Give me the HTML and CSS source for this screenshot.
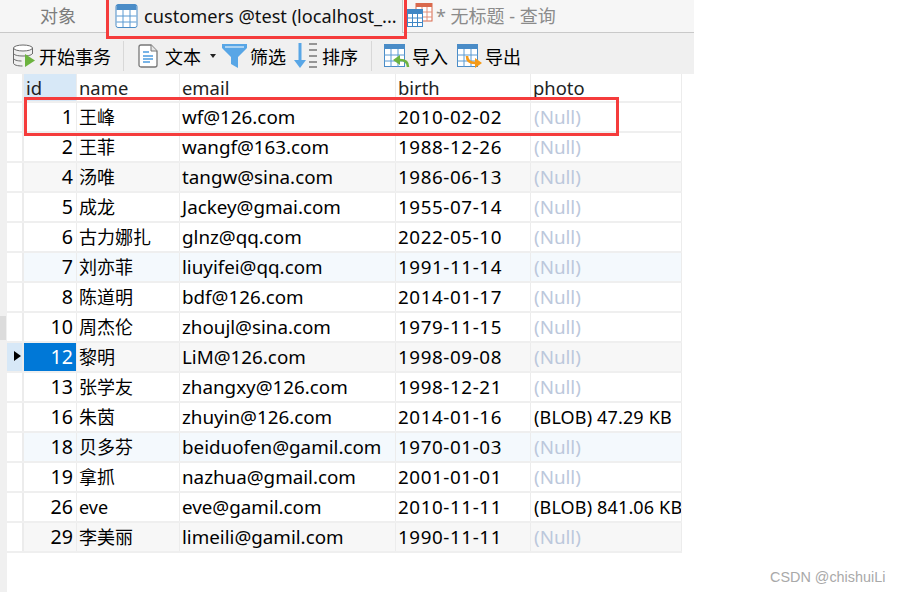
FILE: index.html
```html
<!DOCTYPE html>
<html lang="zh-CN">
<head>
<meta charset="utf-8">
<title>customers</title>
<link rel="stylesheet" href="styles.css">
</head>
<body>
<div class="app">
  <div class="tabs">
    <div class="tab tab-objects">对象</div>
    <div class="tab tab-active">
      <svg class="ico20" viewBox="0 0 22 24"><rect x=".5" y=".5" width="21" height="23" rx="2" fill="#fff" stroke="#4a8cc7"/><rect x="1" y="1" width="20" height="5" fill="#4a8cc7"/><path d="M1 12h20M1 18h20M7.500 6v17M14.500 6v17" stroke="#5a9ad2" fill="none"/></svg>
      <span>customers @test (localhost_...</span>
    </div>
    <div class="tab tab-query">
      <svg class="ico-query" viewBox="0 0 26 24"><rect x="9" y="0" width="16" height="18" fill="#fff" stroke="#d9694d"/><rect x="9" y="0" width="16" height="4" fill="#d9694d"/><path d="M9 9h16M9 14h16M15 4v14M20 4v14" stroke="#e0907a" fill="none"/><rect x=".5" y="6.500" width="15" height="17" fill="#fff" stroke="#3f87c5"/><rect x="0" y="6" width="16" height="5" fill="#3f87c5"/><path d="M0 15h16M0 19.500h16M5.500 11v13M10.500 11v13" stroke="#3f87c5" fill="none"/></svg>
      <span>* 无标题 - 查询</span>
    </div>
  </div>
  <div class="toolbar">
    <div class="tool tool-begin">
      <svg class="ico24" viewBox="0 0 24 24"><ellipse cx="11" cy="4" rx="9.500" ry="3" fill="#fff" stroke="#6b6b6b"/><path d="M1.500 4v15c0 2 4 3 9 3M20.500 4v6M1.500 9c0 2 4 3 9.500 3s9.500-1 9.500-3M1.500 14c0 2 4 3 8 3" fill="none" stroke="#6b6b6b"/><path d="M13 10l10 6.500-10 6.500z" fill="#6cb33f"/></svg>
      <span>开始事务</span>
    </div>
    <i class="sep"></i>
    <div class="tool tool-text">
      <svg class="ico-doc" viewBox="0 0 20 24"><path d="M1 3a2 2 0 0 1 2-2h10l6 6v14a2 2 0 0 1-2 2H3a2 2 0 0 1-2-2z" fill="#fff" stroke="#777" stroke-width="1.300"/><path d="M13 1v6h6" fill="#e6e6e6" stroke="#777"/><path d="M5 8h6M5 12h10M5 15h10M5 18h7" stroke="#4c9ce0" stroke-width="1.300"/></svg>
      <span>文本</span>
      <b class="caret"></b>
    </div>
    <div class="tool tool-filter">
      <svg class="ico-filter" viewBox="0 0 25 24"><path d="M0 0h25v4l-9 9v11l-7-4v-7L0 4z" fill="#58a6e6"/><path d="M3 3h19" stroke="#fff" stroke-width="1"/></svg>
      <span>筛选</span>
    </div>
    <div class="tool tool-sort">
      <svg class="ico-sort" viewBox="0 0 24 26"><path d="M6 0v20" stroke="#58a6e6" stroke-width="3"/><path d="M0 17h12l-6 8z" fill="#58a6e6"/><path d="M15 1h8M15 7h8M15 13h8M15 19h8M15 24h8" stroke="#777" stroke-width="1.300"/></svg>
      <span>排序</span>
    </div>
    <i class="sep sep-b"></i>
    <div class="tool tool-import">
      <svg class="ico26" viewBox="0 0 26 24"><rect x=".5" y=".5" width="20" height="22" fill="#fff" stroke="#4a8cc7"/><rect x="0" y="0" width="21" height="5" fill="#4a8cc7"/><path d="M0 11h21M0 17h21M7 5v18M14 5v18" stroke="#5a9ad2" fill="none"/><path d="M24 23c0-5-3-7-8-7" fill="none" stroke="#6cb33f" stroke-width="2.600"/><path d="M16 11l-7 5 7 5z" fill="#6cb33f"/></svg>
      <span>导入</span>
    </div>
    <div class="tool tool-export">
      <svg class="ico26" viewBox="0 0 26 24"><rect x=".5" y=".5" width="20" height="22" fill="#fff" stroke="#4a8cc7"/><rect x="0" y="0" width="21" height="5" fill="#4a8cc7"/><path d="M0 11h21M0 17h21M7 5v18M14 5v18" stroke="#5a9ad2" fill="none"/><path d="M10 12c0 5 3 7 8 7" fill="none" stroke="#f59a16" stroke-width="2.600"/><path d="M18 14l7 5-7 5z" fill="#f59a16"/></svg>
      <span>导出</span>
    </div>
  </div>
  <div class="grid-wrap">
    <div class="grid" id="grid"></div>
  </div>
  <div class="thumb"></div>
  <div class="mark mark-tab"></div>
  <div class="mark mark-row"></div>
  <div class="watermark">CSDN @chishuiLi</div>
</div>
<script>
var rows=[["1","王峰","wf@126.com","2010-02-02",""],["2","王菲","wangf@163.com","1988-12-26",""],["4","汤唯","tangw@sina.com","1986-06-13",""],["5","成龙","Jackey@gmai.com","1955-07-14",""],["6","古力娜扎","glnz@qq.com","2022-05-10",""],["7","刘亦菲","liuyifei@qq.com","1991-11-14",""],["8","陈道明","bdf@126.com","2014-01-17",""],["10","周杰伦","zhoujl@sina.com","1979-11-15",""],["12","黎明","LiM@126.com","1998-09-08",""],["13","张学友","zhangxy@126.com","1998-12-21",""],["16","朱茵","zhuyin@126.com","2014-01-16","(BLOB) 47.29 KB"],["18","贝多芬","beiduofen@gamil.com","1970-01-03",""],["19","拿抓","nazhua@gmail.com","2001-01-01",""],["26","eve","eve@gamil.com","2010-11-11","(BLOB) 841.06 KB"],["29","李美丽","limeili@gamil.com","1990-11-11",""]];
var h='<div class="row head"><div class="c c0"></div><div class="c c1">id</div><div class="c">name</div><div class="c">email</div><div class="c">birth</div><div class="c">photo</div></div>';
rows.forEach(function(r,i){
  var n=i+1,cls=n%6===3?' gray':(n%6===0?' blue':'');
  if(n===9)cls+=' cur';
  h+='<div class="row'+cls+'"><div class="c c0">'+(n===9?'<b class="arrow"></b>':'')+'</div><div class="c c1 num">'+r[0]+'</div><div class="c">'+r[1]+'</div><div class="c mail">'+r[2]+'</div><div class="c date">'+r[3]+'</div>'+(r[4]?'<div class="c blob">'+r[4]+'</div>':'<div class="c null">(Null)</div>')+'</div>';
});
document.getElementById('grid').innerHTML=h;
</script>
</body>
</html>
```
FILE: styles.css
```css
html,body{margin:0;padding:0;background:#fff}
body{width:898px;height:592px;overflow:hidden;font-family:"Noto Sans","Noto Sans CJK SC",sans-serif;color:#000}
.app{position:relative;width:898px;height:592px;display:flex;flex-direction:column}
.tabs{width:694px;height:33px;box-sizing:border-box;background:#f6f6f6;border-bottom:1px solid #c9c9c9;display:flex;font-size:18px}
.tab{display:flex;align-items:center;white-space:nowrap;padding-bottom:2px}
.tab-objects{width:107px;padding-left:40px;box-sizing:border-box;color:#7d7d7d}
.tab-active{width:296px;height:33px;box-sizing:border-box;padding-left:7px;gap:6px;background:#f0f0f0;border-left:1px solid #d5d5d5;border-right:1px solid #c9c9c9;color:#111;font-size:18.2px}
.tab-query{padding-left:4px;gap:3px;color:#8b8b8b}
.ico20{width:23px;height:24px}
.ico-query{width:26px;height:24px}
.toolbar{width:694px;height:41px;box-sizing:border-box;background:#f0f0f0;display:flex;align-items:center;font-size:18px;padding:4px 0 0 12px}
.tool{display:flex;align-items:center;white-space:nowrap}
.ico24{width:24px;height:24px;margin-right:3px}
.sep{width:1px;height:30px;background:#d8d8d8;margin:0 14px 0 12px}
.sep-b{margin:0 12px 0 13px}
.ico-doc{width:20px;height:24px;margin-right:7px}
.caret{width:0;height:0;border:3px solid transparent;border-top:4px solid #222;border-bottom:0;margin:0 0 0 9px}
.tool-filter{margin-left:6px}
.ico-filter{width:25px;height:24px;margin-right:3px}
.tool-sort{margin-left:8px}
.ico-sort{width:24px;height:26px;margin-right:4px}
.ico26{width:26px;height:24px;margin-right:2px}
.tool-export{margin-left:9px}
.grid-wrap{flex:1;background:#fff;border-left:7px solid #f0f0f0;display:flex;align-items:flex-start}
.grid{width:675px;display:flex;flex-direction:column;font-size:18px}
.row{display:grid;grid-template-columns:17px 53px 103px 216px 135px 151px;height:30px;box-sizing:border-box;border-bottom:2px solid #efefef}
.row.head{height:29px;color:#222;font-size:18.4px}
.c{border-right:1px solid #ececec;padding-left:2px;white-space:nowrap;overflow:hidden;box-sizing:border-box;line-height:28px}
.c0{padding:0;position:relative;border-right:2px solid #ececec}
.c1{text-align:right;padding:0 3px 0 0}
.num{font-size:19.6px}
.mail{font-size:18.8px}
.date{font-size:18.8px;letter-spacing:.6px}
.blob{font-size:18px;letter-spacing:.15px;padding-left:3px}
.head .c1{text-align:left;padding-left:2px;background:#d7e8f7}
.gray .c:not(.c0){background:#f7f7f7}
.blue .c:not(.c0){background:#f4f9fd}
.cur .c0{background:#d7e8f7}
.row.cur .c.c1{background:#0078d7;color:#fff}
.null{color:#bcc8dc;font-size:18.8px;padding-left:3px}
.arrow{position:absolute;left:7px;top:8px;width:0;height:0;border:5px solid transparent;border-left:7px solid #000;border-right:0}
.thumb{position:absolute;left:0;top:316px;width:6px;height:24px;background:#dcdcdc}
.mark{position:absolute;border:3px solid #f53c3c;box-sizing:border-box}
.mark-tab{left:106px;top:-3px;width:301px;height:42px}
.mark-row{left:24px;top:97px;width:595px;height:39px}
.watermark{position:absolute;left:770px;top:569px;font:14.4px "Liberation Sans",sans-serif;color:#a9a9a9;white-space:nowrap}
```
